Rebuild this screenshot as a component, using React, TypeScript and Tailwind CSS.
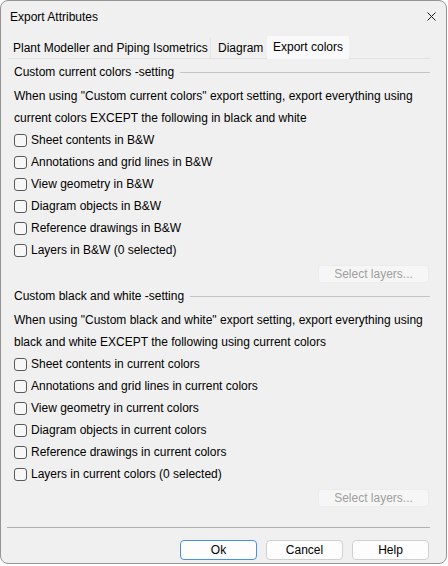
import React from "react";

const font = { fontFamily: '"Liberation Sans", Arial, sans-serif' };

function Check({ label }: { label: string }) {
  return (
    <div className="flex h-[22px] items-center gap-[4px]">
      <div className="h-[13px] w-[13px] shrink-0 rounded-[3px] border border-[#5a5a5a] bg-[#f7f7f7]" />
      <span className="whitespace-nowrap">{label}</span>
    </div>
  );
}

function Section({
  title,
  line1,
  line2,
  items,
  first,
}: {
  title: string;
  line1: string;
  line2: string;
  items: string[];
  first?: boolean;
}) {
  return (
    <div className={first ? "mt-[2px] flex flex-col" : "mt-[2px] flex flex-col"}>
      <div className="flex h-[22px] items-center gap-[6px]">
        <span className="whitespace-nowrap">{title}</span>
        <div className="h-px flex-1 bg-[#c4c4c4]" />
      </div>
      <div className="mt-[2px] flex h-[22px] items-center whitespace-nowrap">{line1}</div>
      <div className="flex h-[22px] items-center whitespace-nowrap">{line2}</div>
      {items.map((it) => (
        <Check key={it} label={it} />
      ))}
      <div className="mt-[4px] flex justify-end pr-px">
        <div className="flex h-[18px] w-[111px] items-center justify-center rounded-[3px] border border-[#ececec] bg-[#f6f6f6] text-[#9f9f9f]">
          Select layers...
        </div>
      </div>
    </div>
  );
}

export default function App() {
  return (
    <div className="min-h-screen bg-white" style={font}>
      <div className="flex h-[564px] w-[447px] flex-col overflow-hidden rounded-[8px] border border-[#949494] bg-[#f0f0f0] text-[12px] leading-none text-black">
        {/* Title bar */}
        <div className="flex h-[32px] shrink-0 items-center justify-between pl-[9px] pr-[10px]">
          <span className="text-[12px]">Export Attributes</span>
          <svg width="9" height="9" viewBox="0 0 9 9" className="mb-px">
            <path d="M0.5 0.5 L8.5 8.5 M8.5 0.5 L0.5 8.5" stroke="#1a1a1a" strokeWidth="1" />
          </svg>
        </div>

        {/* Tabs */}
        <div className="ml-[7px] mt-[4px] flex h-[22px] w-[422px] items-end border-b border-[#e2e2e2]">
          <div className="flex h-[20px] w-[202px] items-center whitespace-nowrap pl-[5px]">
            Plant Modeller and Piping Isometrics
          </div>
          <div className="flex h-[20px] w-[57px] items-center whitespace-nowrap border-l border-[#e4e4e4] pl-[7px]">
            Diagram
          </div>
          <div className="-mb-px flex h-[23px] w-[82px] items-center whitespace-nowrap bg-[#f9f9f9] pb-[2px] pl-[6px]">
            Export colors
          </div>
        </div>

        {/* Content */}
        <div className="ml-[7px] flex w-[422px] flex-col pl-[6px]">
          <Section
            first
            title="Custom current colors -setting"
            line1={'When using "Custom current colors" export setting, export everything using'}
            line2="current colors EXCEPT the following in black and white"
            items={[
              "Sheet contents in B&W",
              "Annotations and grid lines in B&W",
              "View geometry in B&W",
              "Diagram objects in B&W",
              "Reference drawings in B&W",
              "Layers in B&W (0 selected)",
            ]}
          />
          <Section
            title="Custom black and white -setting"
            line1={'When using "Custom black and white" export setting, export everything using'}
            line2="black and white EXCEPT the following using current colors"
            items={[
              "Sheet contents in current colors",
              "Annotations and grid lines in current colors",
              "View geometry in current colors",
              "Diagram objects in current colors",
              "Reference drawings in current colors",
              "Layers in current colors (0 selected)",
            ]}
          />
        </div>

        {/* Separator */}
        <div className="ml-[6px] mt-[20px] h-px w-[423px] bg-[#b0b0b0]" />

        {/* Buttons */}
        <div className="ml-[7px] mt-[12px] flex w-[422px] justify-end gap-[9px] pr-px">
          <div className="flex h-[20px] w-[77px] items-center justify-center rounded-[4px] border border-[#4a90e2] bg-[#fdfdfd]">
            Ok
          </div>
          <div className="flex h-[20px] w-[77px] items-center justify-center rounded-[4px] border border-[#d0d0d0] bg-[#fdfdfd]">
            Cancel
          </div>
          <div className="flex h-[20px] w-[77px] items-center justify-center rounded-[4px] border border-[#d0d0d0] bg-[#fdfdfd]">
            Help
          </div>
        </div>
      </div>
    </div>
  );
}
